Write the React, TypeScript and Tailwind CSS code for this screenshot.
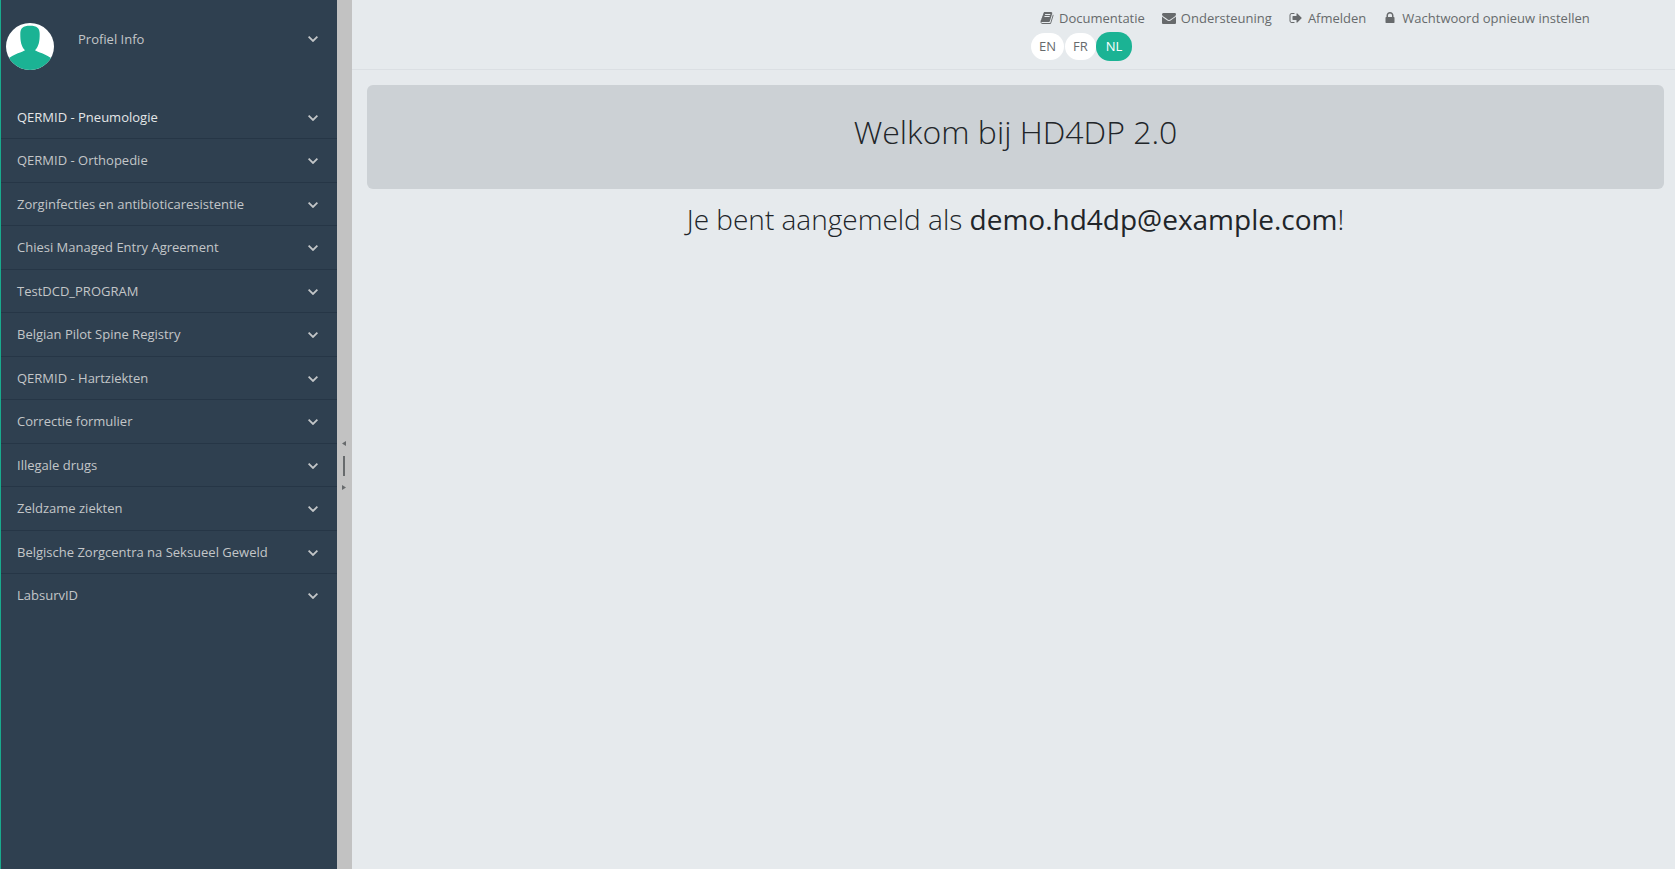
import { useState } from 'react';

const programs = [
  'QERMID - Pneumologie',
  'QERMID - Orthopedie',
  'Zorginfecties en antibioticaresistentie',
  'Chiesi Managed Entry Agreement',
  'TestDCD_PROGRAM',
  'Belgian Pilot Spine Registry',
  'QERMID - Hartziekten',
  'Correctie formulier',
  'Illegale drugs',
  'Zeldzame ziekten',
  'Belgische Zorgcentra na Seksueel Geweld',
  'LabsurvID',
];

const languages = ['EN', 'FR', 'NL'];

const icons = {
  book: 'M1703 478q40 57 18 129l-275 906q-19 64-76.5 107.5t-122.5 43.5h-923q-77 0-148.5-53.5t-99.5-131.5q-24-67-2-127 0-4 3-27t4-37q1-8-3-21.5t-3-19.5q2-11 8-21t16.5-23.5 16.5-23.5q23-38 45-91.5t30-91.5q3-10 .5-30t-.5-28q3-11 17-28t17-23q21-36 42-92t25-90q1-9-2.5-32t.5-28q4-13 22-30.5t22-22.5q19-26 42.5-84.5t27.5-96.5q1-8-3-25.5t-2-26.5q2-8 9-18t18-23 17-21q8-12 16.5-30.5t15-35 16-36 19.5-32 26.5-23.5 36-11.5 47.5 5.5l-1 3q38-9 51-9h761q74 0 114 56t18 130l-274 906q-36 119-71.5 153.5t-128.5 34.5h-869q-27 0-38 15-11 16-1 43 24 70 144 70h923q29 0 56-15.5t35-41.5l300-987q7-22 5-57 38 15 59 43zm-1064 2q-4 13 2 22.5t20 9.5h608q13 0 25.5-9.5t16.5-22.5l21-64q4-13-2-22.5t-20-9.5h-608q-13 0-25.5 9.5t-16.5 22.5zm-83 256q-4 13 2 22.5t20 9.5h608q13 0 25.5-9.5t16.5-22.5l21-64q4-13-2-22.5t-20-9.5h-608q-13 0-25.5 9.5t-16.5 22.5z',
  envelope: 'M1792 710v794q0 66-47 113t-113 47h-1472q-66 0-113-47t-47-113v-794q44 49 101 87 362 246 497 345 57 42 92.5 65.5t94.5 48 110 24.5h2q51 0 110-24.5t94.5-48 92.5-65.5q170-123 498-345 57-39 100-87zm0-294q0 79-49 151t-122 123q-376 261-468 325-10 7-42.5 31t-54 38.5-52 32.5-57.5 27-50 9h-2q-23 0-50-9t-57.5-27-52-32.5-54-38.5-42.5-31q-91-64-262-182.5t-205-142.5q-62-42-117-115.5t-55-136.5q0-78 41.5-130t118.5-52h1472q65 0 112.5 47t47.5 113z',
  signOut: 'M704 1440q0 4 1 20t.5 26.5-3 23.5-10 19.5-20.5 6.5h-320q-119 0-203.5-84.5t-84.5-203.5v-704q0-119 84.5-203.5t203.5-84.5h320q13 0 22.5 9.5t9.5 22.5q0 4 1 20t.5 26.5-3 23.5-10 19.5-20.5 6.5h-320q-66 0-113 47t-47 113v704q0 66 47 113t113 47h312l11.5 1 11.5 3 8 5.5 7 9 2 13.5zm928-544q0 26-19 45l-544 544q-19 19-45 19t-45-19-19-45v-288h-448q-26 0-45-19t-19-45v-384q0-26 19-45t45-19h448v-288q0-26 19-45t45-19 45 19l544 544q19 19 19 45z',
  lock: 'M640 768h512v-192q0-106-75-181t-181-75-181 75-75 181v192zm832 96v576q0 40-28 68t-68 28h-960q-40 0-68-28t-28-68v-576q0-40 28-68t68-28h32v-192q0-184 132-316t316-132 316 132 132 316v192h32q40 0 68 28t28 68z',
};

const links: { label: string; icon: keyof typeof icons }[] = [
  { label: 'Documentatie', icon: 'book' },
  { label: 'Ondersteuning', icon: 'envelope' },
  { label: 'Afmelden', icon: 'signOut' },
  { label: 'Wachtwoord opnieuw instellen', icon: 'lock' },
];

function Chevron() {
  return (
    <svg className="w-[10px] h-[6px] shrink-0" viewBox="0 0 10 6" fill="none" stroke="currentColor" strokeWidth="1.8">
      <path d="M0.600 0.700 5 5 9.400 0.700" />
    </svg>
  );
}

function Avatar() {
  return (
    <svg className="w-12 h-12 shrink-0" viewBox="0 0 48 48">
      <defs>
        <clipPath id="avatar-circle">
          <ellipse cx="24" cy="23.5" rx="24" ry="23.5" />
        </clipPath>
      </defs>
      <g clipPath="url(#avatar-circle)">
        <rect width="48" height="48" fill="#fff" />
        <path
          fill="#1bb394"
          d="M24 2.700c7 0 9.700 2.300 9.700 8.300 0 7-.7 12-4.700 16.300.5.900 7 2.200 16 7.700l3 2v11H0V37l3-2c9-5.500 15.500-6.800 16-7.700C15 23 14.300 18 14.300 11c0-6 2.700-8.300 9.700-8.300z"
        />
      </g>
    </svg>
  );
}

function Sidebar() {
  return (
    <aside className="w-[337px] shrink-0 bg-[#2f4050] border-l border-[#19aa8d] text-[13px] text-[#c3c6c8]">
      <button className="w-full flex items-start pt-[23px] pl-[5px] pr-[19px] h-24 text-left">
        <Avatar />
        <span className="ml-6 mt-[6px] leading-5 flex-1">Profiel Info</span>
        <span className="mt-[13px]">
          <Chevron />
        </span>
      </button>
      <nav>
        <ul>
          {programs.map((program) => (
            <li
              key={program}
              className="h-[44px] odd:h-[43px] odd:pt-px border-b border-[#263646] last:border-b-0 first:text-[#e4e6e7]"
            >
              <button className="w-full h-full flex items-center justify-between pl-4 pr-[19px] text-left">
                <span>{program}</span>
                <span className="text-[#c3c6c8]">
                  <Chevron />
                </span>
              </button>
            </li>
          ))}
        </ul>
      </nav>
    </aside>
  );
}

function Splitter() {
  return (
    <div
      role="separator"
      aria-orientation="vertical"
      className="w-[15px] shrink-0 bg-[#c2c2c2] flex flex-col items-center pr-px pt-[441px] text-[#676a6c]"
    >
      <svg className="w-1 h-[5px]" viewBox="0 0 4 5" fill="currentColor">
        <path d="M4 0v5L0 2.500z" />
      </svg>
      <span className="w-[2px] h-5 mt-[10px] mb-[9px] bg-[#676a6c]" />
      <svg className="w-1 h-[5px]" viewBox="0 0 4 5" fill="currentColor">
        <path d="M0 0v5l4-2.500z" />
      </svg>
    </div>
  );
}

export default function App() {
  const [language, setLanguage] = useState('NL');

  return (
    <div className="min-h-screen flex bg-[#e6eaed] font-['Open_Sans',sans-serif] text-[#212529]">
      <Sidebar />
      <Splitter />
      <main className="flex-1">
        <header className="h-[70px] flex justify-end border-b border-[#dbdfe3] pr-[84px] text-[13px] text-[#676a6c]">
          <div className="w-[560px] pt-2">
            <div className="flex gap-[17px] pl-[9px] leading-5">
              {links.map((link) => (
                <a key={link.label} href="#" className="flex items-center gap-[5px] whitespace-nowrap">
                  <svg className="w-[14px] h-[14px]" viewBox="0 0 1792 1792" fill="currentColor">
                    <path d={icons[link.icon]} />
                  </svg>
                  {link.label}
                </a>
              ))}
            </div>
            <div className="flex items-center gap-px mt-1">
              {languages.map((code) => (
                <button
                  key={code}
                  onClick={() => setLanguage(code)}
                  className={
                    code === language
                      ? 'h-[29px] px-[10px] -ml-px rounded-[14px] bg-[#1bb394] text-white'
                      : 'h-[27px] px-2 rounded-[14px] bg-white'
                  }
                >
                  {code}
                </button>
              ))}
            </div>
          </div>
        </header>
        <div className="pl-[15px] pr-[11px] pt-[15px] text-center font-light">
          <div className="h-[104px] rounded-md bg-[#ccd1d5] pt-[27px]">
            <h1 className="text-[32px] leading-10">Welkom bij HD4DP 2.0</h1>
          </div>
          <h2 className="mt-3 text-[28px] leading-9">
            Je bent aangemeld als <strong className="font-medium">demo.hd4dp@example.com</strong>!
          </h2>
        </div>
      </main>
    </div>
  );
}
